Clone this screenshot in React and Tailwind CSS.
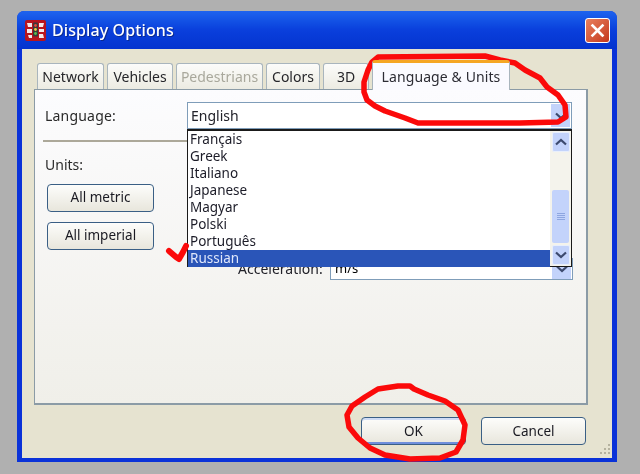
import React from "react";

function Tab({ w, children, disabled }) {
  return (
    <div
      className={`h-[26px] mr-[3px] rounded-t-[3px] border border-b-0 border-[#a9b5bd] bg-gradient-to-b from-[#fcfcfa] to-[#ecebe2] flex items-center justify-center text-[14px] shrink-0 ${disabled ? "text-[#a9a89c]" : "text-[#26262a]"}`}
      style={{ width: w }}
    >
      {children}
    </div>
  );
}

function XpButton({ children, className = "", focused }) {
  return (
    <div
      className={`h-[28px] rounded-[4px] border-[1.5px] border-[#3a5f85] bg-gradient-to-b from-[#fdfdfb] to-[#e8e6dc] flex items-center justify-center text-[13.5px] text-[#1a1a22] ${focused ? "shadow-[inset_0_2px_0_#cfdcf5,inset_0_-2px_0_#6f8fdc]" : ""} ${className}`}
    >
      {children}
    </div>
  );
}

function Chevron({ down }) {
  return (
    <svg width="12" height="8" viewBox="0 0 12 8" fill="none" stroke="#3c4a6e" strokeWidth="2.2">
      <path d={down ? "M1 1.5 L6 6 L11 1.5" : "M1 6.5 L6 2 L11 6.5"} />
    </svg>
  );
}

function ScrollBtn({ down, className = "" }) {
  return (
    <div className={`w-[18px] h-[20px] rounded-[2px] bg-[#c3d3fb] border border-[#e8effc] flex items-center justify-center ${className}`}>
      <Chevron down={down} />
    </div>
  );
}

const items = ["Français", "Greek", "Italiano", "Japanese", "Magyar", "Polski", "Português"];

export default function App() {
  return (
    <div
      className="relative w-[640px] h-[474px] overflow-hidden bg-[#b0b0b0] pt-[11px] pl-[17px] blur-[0.45px]"
      style={{ fontFamily: '"Noto Sans", "Open Sans", sans-serif' }}
    >
      {/* window */}
      <div className="w-[600px] h-[451px] rounded-t-[7px] bg-[#0a32d8] flex flex-col">
        <div className="h-[38px] shrink-0 rounded-t-[7px] bg-gradient-to-b from-[#1f63ee] via-[#0a3fdc] to-[#0433cf] flex items-center pl-[8px] pr-[7px]">
          <svg width="21" height="21" viewBox="0 0 21 21" className="shrink-0">
            <rect width="21" height="21" rx="2" fill="#b8141e" />
            <path d="M2 3 H7 V7 H3 Z M2 9 H7 V13 H2 Z M3 15 H7 V18 H4 Z M14 3 H19 L18 7 H14 Z M14 9 H19 V12 H14 Z M14 14 H18 L19 18 H14 Z" fill="#f4e8e8" />
            <rect x="8" y="2.5" width="5" height="14" rx="1" fill="#3a3a3a" />
            <circle cx="10.5" cy="5.5" r="1.4" fill="#e8483a" />
            <circle cx="10.5" cy="9.5" r="1.4" fill="#f0d040" />
            <circle cx="10.5" cy="13.5" r="1.4" fill="#58c050" />
          </svg>
          <span className="ml-[6px] text-[16px] font-medium text-white tracking-[0.1px] [text-shadow:1px_1px_0_#0a2a90]">Display Options</span>
          <div className="ml-auto w-[25px] h-[25px] rounded-[3px] border border-white bg-gradient-to-br from-[#e8805e] to-[#c4361a] flex items-center justify-center">
            <svg width="15" height="15" viewBox="0 0 15 15" stroke="#fff" strokeWidth="2.6" strokeLinecap="square">
              <path d="M2.5 2.5 L12.5 12.5 M12.5 2.5 L2.5 12.5" />
            </svg>
          </div>
        </div>
        <div className="flex-1 mx-[5px] mb-[4px] bg-[#e6e3d0] relative pt-[14px] px-[12px] flex flex-col">
          {/* tabs */}
          <div className="flex items-end h-[26px] pl-[3px]">
            <Tab w={67}>Network</Tab>
            <Tab w={66}>Vehicles</Tab>
            <Tab w={87} disabled>Pedestrians</Tab>
            <Tab w={54}>Colors</Tab>
            <Tab w={46}>3D</Tab>
            <div className="relative z-10 w-[138px] h-[30px] -mb-[1px] rounded-t-[3px] bg-[#fafaff] border-x border-[#a9b5bd] border-t-[3px] border-t-[#f5a623] flex items-center justify-center text-[14px] text-[#2c2c34] tracking-[0.1px]">
              Language &amp; Units
            </div>
          </div>
          {/* panel */}
          <div className="w-[554px] h-[316px] border border-[#8b9ba6] border-b-2 border-r-2 bg-gradient-to-b from-[#fcfcfe] to-[#f0efe9] relative pt-[12px]">
            <div className="flex items-center h-[27px] pl-[10px]">
              <span className="text-[14px] text-[#2a2a2a] w-[142px] tracking-[0.2px]">Language:</span>
              <div className="w-[385px] h-[27px] border border-[#7f9db9] bg-white flex items-center pl-[3px] text-[14px] text-[#22222a]">
                English
                <div className="ml-auto w-[19px] h-[23px] mr-[1px] bg-[#c3d3fb] flex items-center justify-center">
                  <Chevron down />
                </div>
              </div>
            </div>
            <div className="mt-[11px] ml-[8px] mr-[15px] h-[1.5px] bg-[#aca899]" />
            <div className="mt-[14px] pl-[10px] text-[14px] text-[#2a2a2a] leading-[18px]">Units:</div>
            <XpButton className="mt-[10px] ml-[12px] w-[107px]">All metric</XpButton>
            <XpButton className="mt-[10px] ml-[12px] w-[107px]">All imperial</XpButton>
            <div className="absolute left-[203px] top-[168px] text-[14px] text-[#22222a]">Acceleration:</div>
            <div className="absolute left-[295px] top-[168px] w-[243px] h-[22px] border border-[#7f9db9] bg-white flex items-center pl-[4px] text-[13px]">
              m/s
              <div className="ml-auto w-[19px] h-[20px] mr-[1px] bg-[#c3d3fb] flex items-center justify-center">
                <Chevron down />
              </div>
            </div>
          </div>
          {/* buttons */}
          <div className="flex justify-end gap-[15px] mt-[12px] mr-[14px]">
            <XpButton focused className="w-[105px]">OK</XpButton>
            <XpButton className="w-[105px]">Cancel</XpButton>
          </div>
          {/* grip */}
          <svg width="15" height="15" viewBox="0 0 15 15" fill="#b5b29f" className="absolute right-0 bottom-0">
            <rect x="11" y="1" width="2" height="2" /><rect x="7" y="5" width="2" height="2" /><rect x="11" y="5" width="2" height="2" />
            <rect x="3" y="9" width="2" height="2" /><rect x="7" y="9" width="2" height="2" /><rect x="11" y="9" width="2" height="2" />
          </svg>
        </div>
      </div>

      {/* open dropdown */}
      <div className="absolute left-[187px] top-[129px] w-[385px] h-[138px] bg-white border border-[#1a1a1a] border-t-2 flex text-[13.5px] text-[#1c1c28] leading-[17px]">
        <div className="flex-1 flex flex-col">
          {items.map((t) => (
            <div key={t} className="pl-[2px] h-[17px] shrink-0 flex items-center">{t}</div>
          ))}
          <div className="pl-[2px] h-[17px] shrink-0 flex items-center bg-[#2a55b8] text-[#dfe7fb]">Russian</div>
        </div>
        <div className="w-[21px] bg-[#f4f3ec] flex flex-col items-center pt-[1px] pb-[1px]">
          <ScrollBtn />
          <div className="flex-1 w-full flex flex-col items-center pt-[38px]">
            <div className="w-[17px] h-[53px] rounded-[2px] bg-[#c3d3fb] flex flex-col items-center justify-center gap-[1px]">
              <div className="w-[8px] h-px bg-[#8ea6e0]" /><div className="w-[8px] h-px bg-[#8ea6e0]" /><div className="w-[8px] h-px bg-[#8ea6e0]" /><div className="w-[8px] h-px bg-[#8ea6e0]" />
            </div>
          </div>
          <ScrollBtn down />
        </div>
      </div>

      {/* red annotations */}
      <svg width="640" height="474" viewBox="0 0 640 474" fill="none" stroke="#fb0a0a" strokeWidth="5.5" strokeLinejoin="round" strokeLinecap="round" className="absolute left-0 top-0 pointer-events-none">
        <path d="M378 57 L485 56 L500 60 L515 63 L525 70 L540 78 L547 87 L558 95 L565 105 L566 117 L558 122 L520 123 L418 123 L405 118 L385 111 L375 106 L367 100 L364 92 L364 82 L368 70 L372 62 Z" />
        <path d="M169 251 L176 257 L179 259 L183 252 L186 246" strokeWidth="6" />
        <path d="M398 386 L378 389 L365 397 L352 406 L347 415 L349 427 L358 438 L370 448 L385 455 L410 459 L440 458 L456 452 L463 440 L465 425 L458 410 L445 401 L428 395 L414 389 L410 386 Z" />
      </svg>
    </div>
  );
}
